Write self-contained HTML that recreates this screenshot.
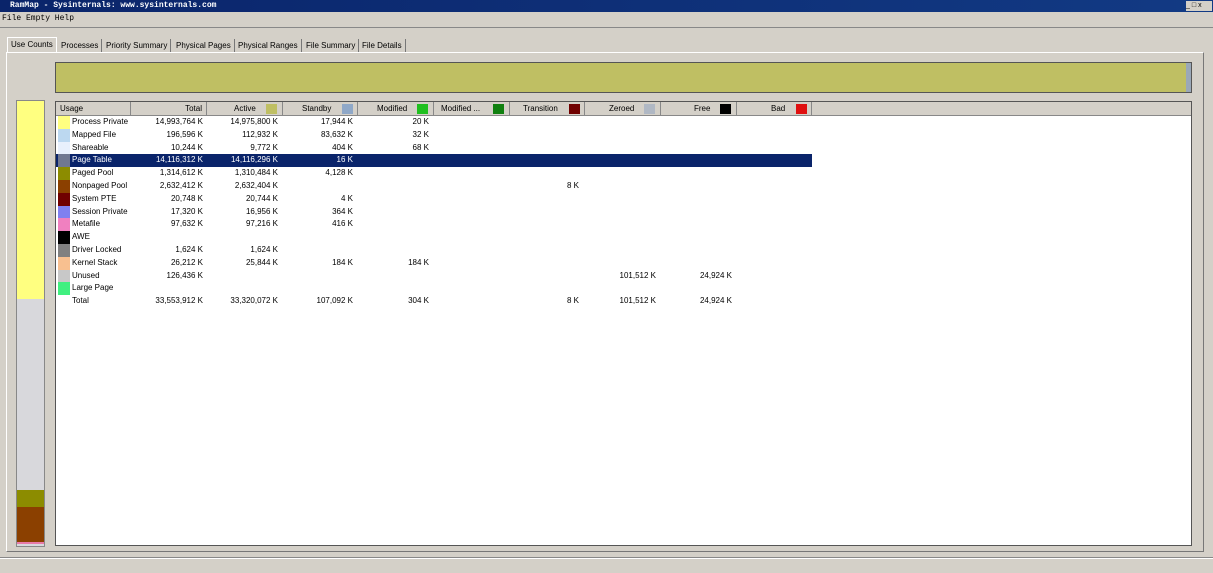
<!DOCTYPE html>
<html><head><style>
*{margin:0;padding:0;box-sizing:border-box}
body{width:1213px;height:573px;background:#d4d0c8;font-family:"Liberation Sans",sans-serif;font-size:8px;color:#000;position:relative;overflow:hidden}
.abs{position:absolute}
#title{left:0;top:0;width:1213px;height:12px;background:linear-gradient(90deg,#0a246a,#123a84);color:#fff;font-family:"Liberation Mono",monospace;font-weight:bold;font-size:8px;line-height:12px;padding-left:10px}
#menu{top:13px;left:2px;font-family:"Liberation Mono",monospace;font-size:8px;line-height:12px}
.tab{top:39px;height:13px;line-height:13px;border-right:1px solid #777;padding:0 3px;font-size:8px}
#list{left:55px;top:101px;width:1137px;height:445px;background:#fff;border:1px solid #555}
.hd{position:absolute;top:0;height:14px;background:#d4d0c8;border-right:1px solid #888;border-bottom:1px solid #888;line-height:14px;font-size:8px}
.sw{position:absolute;top:2px;width:11px;height:10px}
.row{position:absolute;left:0;height:12.8px;line-height:12.8px;width:756px}
.row span{position:absolute}
.r{text-align:right;width:70px}
.c{position:absolute;left:2px;top:0;width:12px;height:12.8px}
</style></head><body>
<div id="title" class="abs">RamMap - Sysinternals: www.sysinternals.com</div>
<div class="abs" style="left:1186px;top:1px;width:26px;height:10px;background:#d4d0c8;font-size:7px;line-height:10px;letter-spacing:2px">_□x</div>
<div id="menu" class="abs">File Empty Help</div>
<div class="abs" style="left:0;top:27px;width:1213px;height:1px;background:#888"></div>
<div class="tab abs" style="left:7px;top:37px;border:1px solid #fff;border-bottom:none;background:#d4d0c8;height:15px">Use Counts</div>
<div class="tab abs" style="left:58px">Processes</div>
<div class="tab abs" style="left:103px">Priority Summary</div>
<div class="tab abs" style="left:173px">Physical Pages</div>
<div class="tab abs" style="left:235px">Physical Ranges</div>
<div class="tab abs" style="left:303px">File Summary</div>
<div class="tab abs" style="left:359px">File Details</div>
<div class="abs" style="left:6px;top:52px;width:1198px;height:500px;border:1px solid #fff;border-right-color:#777;border-bottom-color:#777"></div>
<div class="abs" style="left:55px;top:62px;width:1137px;height:31px;background:#bfbf63;border:1px solid #555"></div>
<div class="abs" style="left:1186px;top:63px;width:5px;height:29px;background:#9aa8b8"></div>
<div class="abs" style="left:16px;top:100px;width:29px;height:447px;border:1px solid #888;background:#d8d8dc"></div>
<div class="abs" style="left:17px;top:101px;width:27px;height:198px;background:#ffff80"></div>
<div class="abs" style="left:17px;top:490px;width:27px;height:17px;background:#8c8c00"></div>
<div class="abs" style="left:17px;top:507px;width:27px;height:35px;background:#8b4000"></div>
<div class="abs" style="left:17px;top:542px;width:27px;height:2px;background:#e87aa8"></div>
<div id="list" class="abs">
<div class="hd" style="left:0;width:75px;padding-left:4px">Usage</div>
<div class="hd" style="left:75px;width:76px;text-align:right;padding-right:4px">Total</div>
<div class="hd" style="left:151px;width:76px;padding-left:27px">Active<div class="sw" style="left:59px;background:#bfbf63"></div></div>
<div class="hd" style="left:227px;width:75px;padding-left:19px">Standby<div class="sw" style="left:59px;background:#8fa8c8"></div></div>
<div class="hd" style="left:302px;width:76px;padding-left:19px">Modified<div class="sw" style="left:59px;background:#20c020"></div></div>
<div class="hd" style="left:378px;width:76px;padding-left:7px">Modified ...<div class="sw" style="left:59px;background:#108010"></div></div>
<div class="hd" style="left:454px;width:75px;padding-left:13px">Transition<div class="sw" style="left:59px;background:#700000"></div></div>
<div class="hd" style="left:529px;width:76px;padding-left:24px">Zeroed<div class="sw" style="left:59px;background:#b0b8c4"></div></div>
<div class="hd" style="left:605px;width:76px;padding-left:33px">Free<div class="sw" style="left:59px;background:#000"></div></div>
<div class="hd" style="left:681px;width:75px;padding-left:34px">Bad<div class="sw" style="left:59px;background:#e01010"></div></div>
<div class="hd" style="left:756px;width:379px;border-right:none"></div>
<div id="rows"></div>
</div>
<script>
var d=[["Process Private","#ffff80","14,993,764 K","14,975,800 K","17,944 K","20 K","","",""],
["Mapped File","#bcd8f0","196,596 K","112,932 K","83,632 K","32 K","","",""],
["Shareable","#e8f0fc","10,244 K","9,772 K","404 K","68 K","","",""],
["Page Table","#707890","14,116,312 K","14,116,296 K","16 K","","","",""],
["Paged Pool","#8c8c00","1,314,612 K","1,310,484 K","4,128 K","","","",""],
["Nonpaged Pool","#8b4000","2,632,412 K","2,632,404 K","","","8 K","",""],
["System PTE","#700000","20,748 K","20,744 K","4 K","","","",""],
["Session Private","#8080f0","17,320 K","16,956 K","364 K","","","",""],
["Metafile","#f080c0","97,632 K","97,216 K","416 K","","","",""],
["AWE","#000","","","","","","",""],
["Driver Locked","#808080","1,624 K","1,624 K","","","","",""],
["Kernel Stack","#f8c090","26,212 K","25,844 K","184 K","184 K","","",""],
["Unused","#c8c8c8","126,436 K","","","","","101,512 K","24,924 K"],
["Large Page","#40f080","","","","","","",""],
["Total","","33,553,912 K","33,320,072 K","107,092 K","304 K","8 K","101,512 K","24,924 K"]];
var rights=[147,222,297,373,0,523,600,676];
var h="";
d.forEach(function(r,i){
var sel=i==3;
h+='<div class="row" style="top:'+(14+i*12.8)+'px;'+(sel?'background:#0a246a;color:#fff':'')+'">';
if(r[1])h+='<div class="c" style="background:'+r[1]+'"></div>';
h+='<span style="left:16px">'+r[0]+'</span>';
var vals=[r[2],r[3],r[4],r[5],"",r[6],r[7],r[8]];
for(var k=0;k<8;k++){if(vals[k])h+='<span class="r" style="left:'+(rights[k]-70)+'px">'+vals[k]+'</span>';}
h+='</div>';});
document.getElementById("rows").innerHTML=h;
</script>
<div class="abs" style="left:0;top:557px;width:1213px;height:1px;background:#888"></div>
<div class="abs" style="left:0;top:558px;width:1213px;height:1px;background:#fff"></div>
</body></html>
